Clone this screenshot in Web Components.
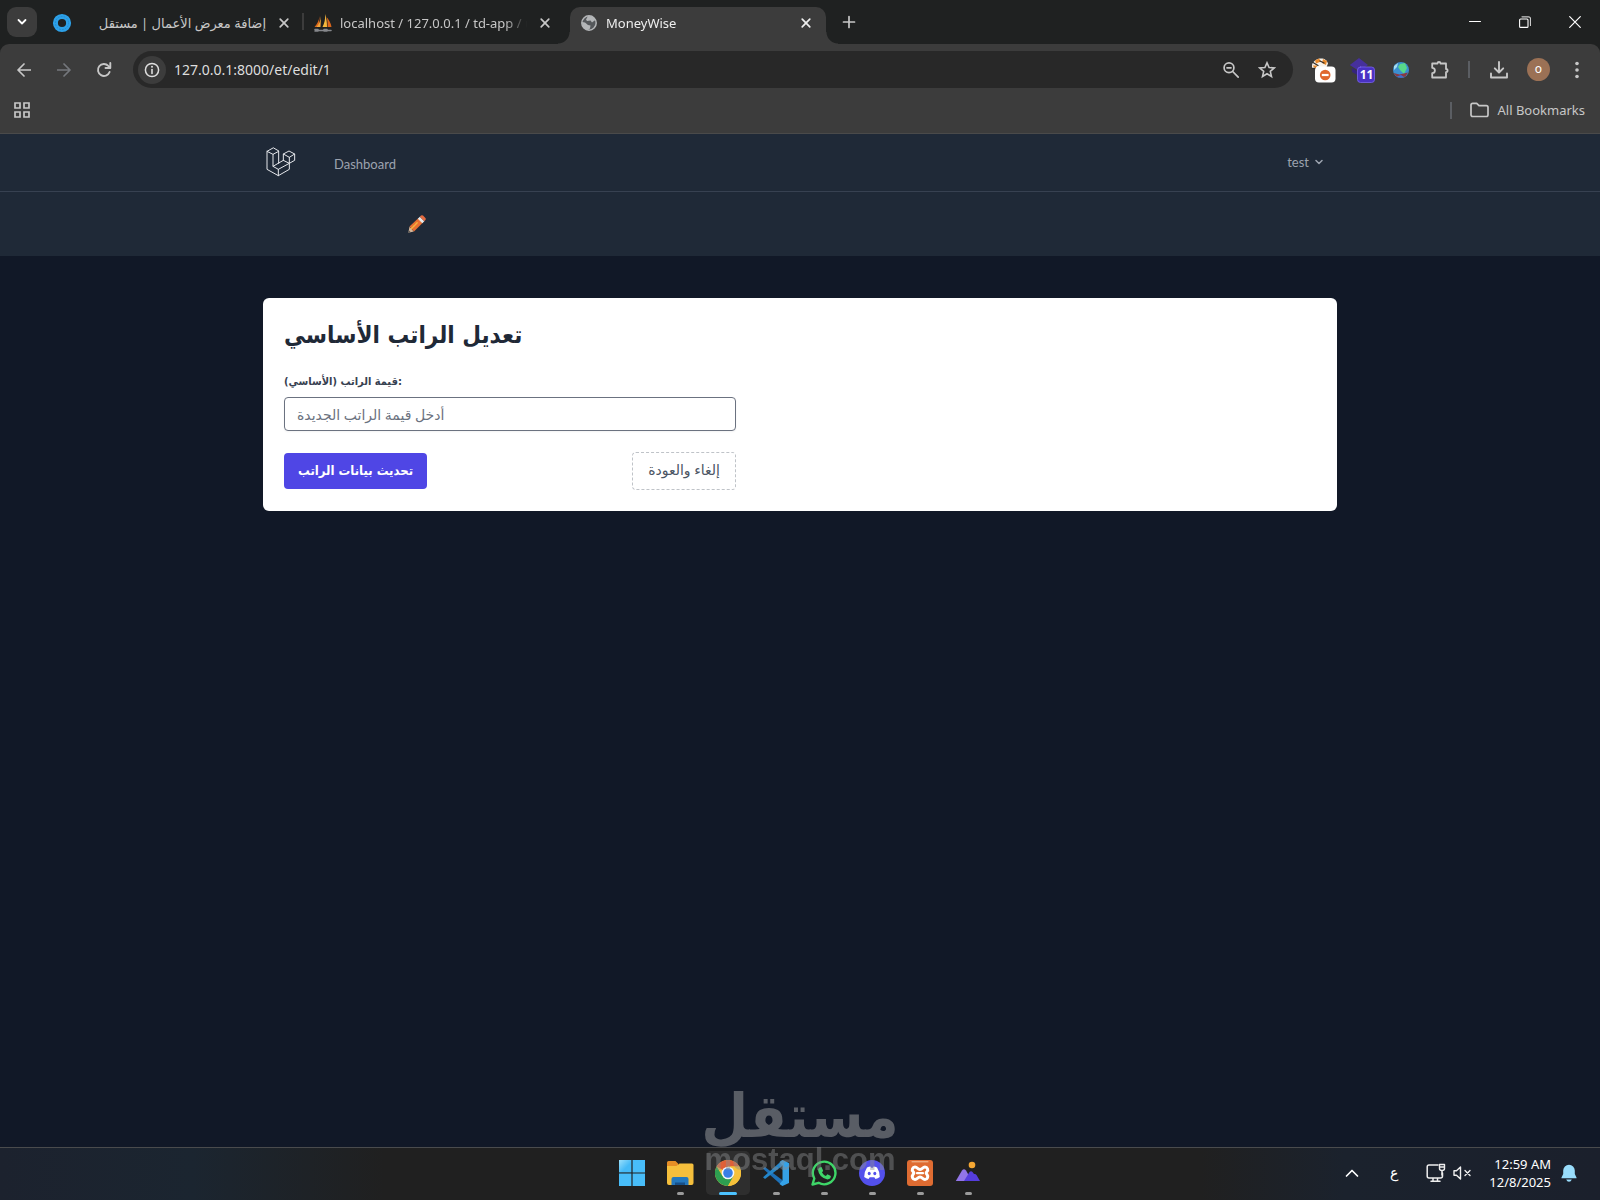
<!DOCTYPE html>
<html lang="en">
<head>
<meta charset="utf-8">
<title>MoneyWise</title>
<style>
  html, body { margin: 0; }
  body {
    min-height: 100vh;
    display: flex;
    flex-direction: column;
    background: #111827;
    color: #c7c7c7;
    font: 13px/20px "Noto Sans", "Open Sans", "DejaVu Sans", sans-serif;
  }
  main { flex: 1; }
</style>
</head>
<body>
  <browser-window>
    <browser-tab slot="tabs" icon="mostaql" dir="rtl">إضافة معرض الأعمال | مستقل</browser-tab>
    <browser-tab slot="tabs" icon="sails">localhost / 127.0.0.1 / td-app / users</browser-tab>
    <browser-tab slot="tabs" icon="globe" active>MoneyWise</browser-tab>
  </browser-window>
  <site-nav user="test"><a-link slot="links" href="#dashboard">Dashboard</a-link></site-nav>
  <main>
    <salary-card><span slot="title">تعديل الراتب الأساسي</span></salary-card>
  </main>
  <task-bar></task-bar>
  <water-mark></water-mark>

<script>
const svg = (w, h, box, body) =>
  `<svg width="${w}" height="${h}" viewBox="${box}" fill="none" stroke-linecap="round" stroke-linejoin="round" aria-hidden="true">${body}</svg>`;

const ICONS = {
  down: svg(12, 12, '0 0 12 12', '<path d="M2.500 4l3.500 3.500L9.500 4" stroke="#fff" stroke-width="1.800"/>'),
  close: svg(12, 12, '0 0 12 12', '<path d="M2.200 2.200l7.600 7.600M9.800 2.200l-7.600 7.600" stroke="currentColor" stroke-width="1.700"/>'),
  plus: svg(14, 14, '0 0 14 14', '<path d="M7 1.500v11M1.500 7h11" stroke="#c7c7c7" stroke-width="1.700"/>'),
  mostaql: svg(20, 20, '0 0 20 20', '<circle cx="10" cy="10" r="6.600" stroke="#2da1e8" stroke-width="5"/><circle cx="10" cy="10" r="6.600" stroke="#2389d0" stroke-dasharray="1 2"/>'),
  sails: svg(18, 18, '0 0 18 18', '<path d="M5.500 2C5 7 3 10 .5 13H5z" fill="#d9651b"/><path d="M7 2l-.5 11H2.500C5 10 6.500 7 7 2z" fill="#f2a63b"/><path d="M11 0c.5 5-.5 9-2.500 13H13C13 8 12.500 4 11 0z" fill="#f5b83d"/><path d="M12.500 3c2.500 3 4.500 6 5 10h-4c.3-4 0-7-1-10z" fill="#d9651b"/><path d="M1 15.500h3m1 1h4m1-1h3m1 1h3M1 17h3m6 0h3" stroke="#85878b" stroke-width="1.600"/>'),
  globe: svg(16, 16, '0 0 16 16', '<circle cx="8" cy="8" r="7.200" fill="#55585b" stroke="#b4b6b8" stroke-width="1.500"/><path d="M7 1c3-.5 6 1 7.300 4L11 7.500 9.500 5.500 6 6 5 4.500zM1 7l3 .5 3 2.500 2.500.5-.5 3-2 1.500C3.500 14.500 1 11.500 1 7z" fill="#b4b6b8"/>'),
  minimise: svg(12, 12, '0 0 12 12', '<path d="M.5 5.500h11" stroke="#fff"/>'),
  restore: svg(12, 12, '0 0 12 12', '<rect x=".6" y="3" width="8.400" height="8.400" rx="1" stroke="#fff" stroke-width="1.100"/><path d="M3 .8h6.500a2 2 0 0 1 2 2V9.500" stroke="#ccc" stroke-width="1.200"/>'),
  exit: svg(12, 12, '0 0 12 12', '<path d="M.7.7l10.600 10.600M11.300.7L.7 11.300" stroke="#fff" stroke-width="1.200"/>'),
  back: svg(14, 14, '0 0 14 14', '<path d="M13.500 7H1.200M7 1L1 7l6 6" stroke="#c7c7c7" stroke-width="1.700"/>'),
  forward: svg(14, 14, '0 0 14 14', '<path d="M.5 7h12.300M7 1l6 6-6 6" stroke="#74777c" stroke-width="1.700"/>'),
  reload: svg(16, 16, '0 0 16 16', '<path d="M13.600 10A6 6 0 1 1 12.300 3.800L14 5.500" stroke="#c7c7c7" stroke-width="1.900"/><path d="M14.300 1v5H9.500" stroke="#c7c7c7" stroke-width="1.900"/>'),
  info: svg(16, 16, '0 0 16 16', '<circle cx="8" cy="8" r="6.600" stroke="#dedede" stroke-width="1.500"/><path d="M8 7.500v4" stroke="#dedede" stroke-width="1.600"/><circle cx="8" cy="4.800" r="1" fill="#dedede"/>'),
  zoom: svg(18, 18, '0 0 18 18', '<circle cx="7" cy="6.800" r="4.900" stroke="#c7c7c7" stroke-width="1.700"/><path d="M10.700 10.500l5.500 5.700M5 6.800h4" stroke="#c7c7c7" stroke-width="1.700"/>'),
  star: svg(18, 18, '0 0 18 18', '<path d="M9 1.800l2.100 4.700 5.100.5-3.900 3.400 1.200 5.100L9 12.800l-4.500 2.700 1.200-5.100L1.800 7l5.100-.5z" stroke="#c7c7c7" stroke-width="1.600" stroke-linejoin="miter"/>'),
  fox: svg(26, 26, '0 0 26 26', '<path d="M2 8c1-4 5-6.500 9-6.500 4 0 6 2 7 5l-2 5H4.500L2 11z" fill="#f7f2ea"/><path d="M5 3.500l4-2 2 3-5 2zM13 2l4 2-1 4-4-2zM2.500 8.500h5l-2 3z" fill="#e98a2c"/><path d="M3 5.500l5 3M10 4l4 2M2 11.500h4" stroke="#332d29" stroke-width="1.300"/><rect x="5" y="9.500" width="20.500" height="16" rx="4" fill="#fff"/><circle cx="15.200" cy="18" r="5.300" fill="#e0682f"/><path d="M11.800 18h6.800" stroke="#fff" stroke-width="2.200" stroke-linecap="butt"/>'),
  hat: svg(26, 26, '0 0 26 26', '<path d="M.8 8L10 1l9 7-9 6z" fill="#46309c"/><path d="M3 11l6 3.500v4L3 15z" fill="#35247c"/><rect x="8.500" y="10" width="17" height="15.500" rx="3" fill="#4a32c4" stroke="#7a65ec" stroke-width=".8"/>'),
  earth: svg(16, 16, '0 0 16 16', '<circle cx="8" cy="8" r="8" fill="#3b8fd0"/><path d="M7 2l5-1 2 5-3 6-4-4-2-3z" fill="#58d88a"/><path d="M1 4l4-3-1 4-3 3z" fill="#a5dcef"/><path d="M.5 11l6 1.500 8.500-2-2.500 4-5 1.500L3 14z" fill="#893943"/><path d="M4 14.500l4-1.500 3 2-3 1z" fill="#3d6fd0"/>'),
  puzzle: svg(20, 20, '0 0 20 20', '<path d="M2.200 3.500h5.300a1.500 1.500 0 0 1 3 0h5.500v5.500a1.600 1.600 0 0 1 0 3.200v5.300H2.200v-4.300a2.700 2.700 0 0 0 0-5.400z" stroke="#c7c7c7" stroke-width="1.800"/>'),
  download: svg(18, 18, '0 0 18 18', '<path d="M9 1v10M4.800 7.300L9 11.500l4.200-4.200M1 12.500v4h16v-4" stroke="#c7c7c7" stroke-width="1.900"/>'),
  kebab: svg(6, 18, '0 0 6 18', '<circle cx="3" cy="2.500" r="1.800" fill="#c7c7c7"/><circle cx="3" cy="9" r="1.800" fill="#c7c7c7"/><circle cx="3" cy="15.500" r="1.800" fill="#c7c7c7"/>'),
  apps: svg(16, 16, '0 0 16 16', '<path d="M1 1h5v5H1zM10 1h5v5h-5zM1 10h5v5H1zM10 10h5v5h-5z" stroke="#c7c7c7" stroke-width="1.700" stroke-linejoin="miter"/>'),
  folder: svg(19, 16, '0 0 19 16', '<path d="M1 12.500V3a1.700 1.700 0 0 1 1.700-1.700h4L9 3.600h7.300A1.700 1.700 0 0 1 18 5.300v7.500a1.700 1.700 0 0 1-1.700 1.700H2.700A1.700 1.700 0 0 1 1 12.500z" stroke="#c7c7c7" stroke-width="1.700"/>'),
  laravel: svg(30, 30, '79 51 90 90', '<path d="M100 54L82 64v54l34 19 33-19v-18l16-9V72l-17-9-17 9v19l-31 18V73l17-9zM82 64l18 9M117 64v36M100 109l16 9 33-18-18-9M116 118v19M131 72l18 10 16-10M149 82v18" stroke="#e5e7eb" stroke-width="3"/>'),
  caret: svg(8, 8, '0 0 8 8', '<path d="M1 2.500l3 3 3-3" stroke="#9ca3af" stroke-width="1.500"/>'),
  pencil: svg(18, 18, '0 0 18 18', '<path d="M.3 17.700l1.200-6L5.800 16.500z" fill="#d8b79a"/><path d="M.3 17.700l.5-2.500 2 2z" fill="#555"/><path d="M1.500 11.500L10.500 3l4.500 4.500-9 9z" fill="#e66f33"/><path d="M3.500 13.500l6-6" stroke="#f5b13d" stroke-width="1.500" stroke-dasharray="2 1"/><path d="M9.800 3.700l2-2 4.500 4.500-2 2z" fill="#e6e9ea"/><path d="M11.800 1.700L13 .6q1-.8 2 0l2.400 2.400q.8 1 0 2l-1.100 1.200z" fill="#e46b41"/>'),
  windows: svg(26, 26, '0 0 26 26', '<defs><linearGradient id="g" x2="1" y2="1"><stop stop-color="#9be0fb"/><stop offset=".6" stop-color="#45baf7"/></linearGradient></defs><path d="M0 0h12.400v12.400H0z" fill="url(#g)"/><path d="M13.600 0H26v12.400H13.600zM0 13.600h12.400V26H0zM13.600 13.600H26V26H13.600z" fill="#48bdf9"/>'),
  explorer: svg(28, 26, '0 0 28 26', '<path d="M1 8V2.500Q1 1 2.500 1h7l3 3H12v5z" fill="#e58e26"/><path d="M1 6h9.500l3-2.500H26q1.500 0 1.500 1.500v18q0 2-2 2H3q-2 0-2-2z" fill="#f5bf3c"/><path d="M5.500 25v-6q0-2 2-2h13q2 0 2 2v6z" fill="#2478bd"/><path d="M9 25v-2.500h10V25" fill="#174f87"/>'),
  chrome: svg(26, 26, '0 0 26 26', '<circle cx="13" cy="13" r="13" fill="#f6c13a"/><path d="M13 13L1.740 6.500A13 13 0 0 1 24.260 6.500H13z" fill="#df6038"/><path d="M1.740 6.500A13 13 0 0 0 13 26l5.500-9.500L7.500 16.200z" fill="#2d9e50"/><path d="M13 6.500h11.260A13 13 0 0 1 13 26l5.600-9.700z" fill="#f6c13a"/><circle cx="13" cy="13" r="6.300" fill="#f4f6fa"/><circle cx="13" cy="13" r="4.800" fill="#397fe6"/>'),
  vscode: svg(26, 26, '0 0 26 26', '<path d="M0 8.800l2-1.800L19.500 20.300V26z" fill="#1d71b8"/><path d="M0 17.200L2 19 19.500 5.700V0z" fill="#2486ca"/><path d="M19.500 0L26 3v20l-6.500 3-3-2 3-3.500v-15l-3-3.500z" fill="#35a2e8"/>'),
  whatsapp: svg(26, 26, '0 0 26 26', '<path d="M1.500 24.500l1.800-6A11.300 11.300 0 1 1 7.600 22.800z" stroke="#3ed668" stroke-width="2.400"/><path d="M8.500 7.500l2-.5 1.700 3.700-1.200 1.700q1.500 2.600 3.900 3.500l1.500-1.600 3.500 1.700q0 3-3.400 3.500Q8 17.500 7 10q.3-1.800 1.500-2.500z" fill="#3ed668"/>'),
  discord: svg(26, 26, '0 0 26 26', '<circle cx="13" cy="13" r="13" fill="#5350ec"/><path d="M8 7.500q2-1 3.500-1l.7 1.200h1.600l.7-1.200q1.500 0 3.500 1 3 4.500 2.800 9.500-2 1.700-4.300 2l-1.200-1.800h-4.600L9.500 19q-2.300-.3-4.300-2Q5 12 8 7.500z" fill="#fff"/><ellipse cx="10.200" cy="13.500" rx="1.500" ry="1.700" fill="#5350ec"/><ellipse cx="15.800" cy="13.500" rx="1.500" ry="1.700" fill="#5350ec"/>'),
  xampp: svg(26, 26, '0 0 26 26', '<rect width="26" height="26" rx="3" fill="#df6c32"/><path d="M5 1.800h16" stroke="#f3c49c"/><path d="M8 7c2.500 0 2.500 2.500 5 2.500S15.500 7 18 7s3.500 3 2 4.500c-1 1-1 2 0 3 1.500 2 .5 5-2 5s-2.500-2.500-5-2.500-2.500 2.500-5 2.500-3.500-3-2-5c1-1 1-2 0-3C4.500 10 5.500 7 8 7z" stroke="#fff" stroke-width="3"/><path d="M10 13.200h6" stroke="#fff" stroke-width="2.200"/>'),
  peaks: svg(26, 26, '0 0 26 26', '<path d="M.8 21L7 10.500q2-2.500 4 0l4 7L13 21z" fill="#9275e8"/><path d="M9 21l5.500-9q1.500-1.500 3 0L19 14q1.500-.5 2.500 1l3.500 6z" fill="#553ddd"/><circle cx="17" cy="5" r="3.300" fill="#f5a733"/>'),
  up: svg(14, 14, '0 0 14 14', '<path d="M1.500 10L7 4.500l5.500 5.500" stroke="#fff" stroke-width="1.700"/>'),
  monitor: svg(20, 20, '0 0 20 20', '<path d="M12 2H3Q1.200 2 1.200 4v9q0 2 1.800 2h11.500q2 0 2-2v-3M7 15v3M11.500 15v3M5 18.300h9" stroke="#eee" stroke-width="1.500"/><path d="M13.500 1.500h5v4q0 2-2.500 2t-2.500-2zM13.500 4h5" stroke="#eee" stroke-width="1.400"/><path d="M16 8v4" stroke="#eee" stroke-width="1.500"/>'),
  mute: svg(18, 14, '0 0 18 14', '<path d="M1 4.800v4.400h2.500L7.500 13V1L3.500 4.800zM12 4.500l5 5M17 4.500l-5 5" stroke="#eee" stroke-width="1.400"/>'),
  bell: svg(16, 18, '0 0 16 18', '<path d="M.5 13.500L2.200 10V6.500a5.800 5.800 0 0 1 11.600 0V10l1.700 3.500v.7H.5zM5.200 15.500h5.600Q10 17.700 8 17.700t-2.800-2.200z" fill="#98dcfb"/>')
};

class BaseElement extends HTMLElement {
  constructor() {
    super();
    this.attachShadow({ mode: 'open' });
  }
  connectedCallback() {
    this.shadowRoot.innerHTML = `
      <style>
        * { box-sizing: border-box; }
        svg { display: block; flex: none; }
        button { margin: 0; padding: 0; border: 0; background: none; color: inherit; font: inherit; display: flex; align-items: center; justify-content: center; }
        a { color: inherit; text-decoration: none; }
      </style>${this.render()}`;
  }
}

customElements.define('a-link', class extends BaseElement {
  render() {
    return `<style>:host { display: block; }</style><a href="${this.getAttribute('href')}"><slot></slot></a>`;
  }
});

customElements.define('browser-tab', class extends BaseElement {
  render() {
    return `
      <style>
        :host { display: block; flex: 0 1 261px; min-width: 0; height: 37px; direction: ltr; position: relative; color: #c7c7c7; }
        .tab { display: flex; align-items: center; height: 32px; padding: 0 10px; gap: 8px; }
        .icon { width: 18px; display: flex; justify-content: center; }
        .title { flex: 1; overflow: hidden; white-space: nowrap; }
        :host([dir=rtl]) .title { direction: rtl; }
        :host([dir=rtl])::after { content: ""; position: absolute; right: 0; top: 6px; width: 2px; height: 17px; background: #3c3c3c; }
        :host(:not([dir=rtl])) .title { -webkit-mask-image: linear-gradient(90deg, #000 88%, transparent); mask-image: linear-gradient(90deg, #000 88%, transparent); }
        button { width: 20px; height: 20px; }
        :host([active]) { background: #3c3c3c; border-radius: 10px 10px 0 0; color: #eee; flex-basis: 256px; margin-left: 5px; }
        :host([active])::before, :host([active])::after { content: ""; position: absolute; bottom: 0; width: 12px; height: 12px; }
        :host([active])::before { right: 100%; background: radial-gradient(circle at 0 0, #1f2121 11px, #3c3c3c 12px); }
        :host([active])::after { left: 100%; background: radial-gradient(circle at 100% 0, #1f2121 11px, #3c3c3c 12px); }
      </style>
      <div class="tab">
        <span class="icon">${ICONS[this.getAttribute('icon')]}</span>
        <span class="title"><slot></slot></span>
        <button aria-label="Close tab">${ICONS.close}</button>
      </div>`;
  }
});

customElements.define('browser-window', class extends BaseElement {
  render() {
    return `
      <style>
        :host { display: block; background: #1f2121; border-bottom: 1px solid #4a4a4a; }
        .strip { display: flex; padding-top: 7px; height: 44px; }
        .menu { width: 30px; height: 30px; margin: 0 6px 0 7px; border-radius: 9px; background: #3c3c3c; }
        .plus { width: 20px; height: 30px; margin-left: 13px; }
        .system { display: flex; margin-left: auto; }
        .system button { width: 50px; height: 30px; }
        .panel { background: #3c3c3c; border-radius: 9px 9px 0 0; }
        .toolbar { display: flex; align-items: center; height: 51px; padding: 0 5px 0 4px; }
        .tool { width: 39px; height: 36px; }
        .nav { width: 40px; }
        .address { flex: 1; display: flex; align-items: center; height: 37px; margin: 0 10px 0 9px; padding: 0 8px 0 5px; border-radius: 19px; background: #282828; }
        .info { width: 28px; height: 28px; border-radius: 14px; background: #3c3c3c; }
        .address input { flex: 1; min-width: 0; padding: 0; margin: 0 0 0 8px; border: 0; outline: 0; background: none; color: #dedede; font: 14px/20px "Noto Sans", sans-serif; }
        .address .tool { width: 36px; }
        .ext { position: relative; }
        .ext b { position: absolute; left: 16px; top: 16px; width: 17px; text-align: center; font-size: 12px; line-height: 14px; color: #fff; }
        .rule { width: 2px; height: 17px; background: #5b5e63; }
        .rule.mid { margin: 0 9px; }
        .avatar { width: 23px; height: 23px; border-radius: 12px; background: #9b7155; color: #fff; font-size: 12px; line-height: 12px; margin: 0 9px 0 9px; padding-bottom: 2px; }
        .marks { display: flex; align-items: center; justify-content: flex-end; height: 38px; padding: 0 15px 8px 14px; }
        .apps { margin-right: auto; }
        .marks .rule { margin-right: 18px; }
        .marks a { display: flex; align-items: center; gap: 8px; }
        .end { width: 36px; }
      </style>
      <div class="strip">
        <button class="menu" aria-label="Search tabs">${ICONS.down}</button>
        <slot name="tabs"></slot>
        <button class="plus" aria-label="New tab">${ICONS.plus}</button>
        <div class="system">
          <button aria-label="Minimise">${ICONS.minimise}</button>
          <button aria-label="Restore">${ICONS.restore}</button>
          <button aria-label="Close">${ICONS.exit}</button>
        </div>
      </div>
      <div class="panel">
        <div class="toolbar">
          <button class="tool nav" aria-label="Back">${ICONS.back}</button>
          <button class="tool nav" aria-label="Forward">${ICONS.forward}</button>
          <button class="tool nav" aria-label="Reload">${ICONS.reload}</button>
          <div class="address">
            <button class="info" aria-label="Site information">${ICONS.info}</button>
            <input type="text" aria-label="Address" value="127.0.0.1:8000/et/edit/1">
            <button class="tool" aria-label="Zoom">${ICONS.zoom}</button>
            <button class="tool" aria-label="Bookmark">${ICONS.star}</button>
          </div>
          <button class="tool ext" aria-label="Blocker">${ICONS.fox}</button>
          <button class="tool ext" aria-label="Counter">${ICONS.hat}<b>11</b></button>
          <button class="tool ext" aria-label="Globe">${ICONS.earth}</button>
          <button class="tool" aria-label="Extensions">${ICONS.puzzle}</button>
          <span class="rule mid"></span>
          <button class="tool" aria-label="Downloads">${ICONS.download}</button>
          <button class="avatar" aria-label="Profile">o</button>
          <button class="tool end" aria-label="Menu">${ICONS.kebab}</button>
        </div>
        <div class="marks">
          <button class="apps" aria-label="Apps">${ICONS.apps}</button>
          <span class="rule"></span>
          <a href="#bookmarks">${ICONS.folder}<span>All Bookmarks</span></a>
        </div>
      </div>`;
  }
});

customElements.define('site-nav', class extends BaseElement {
  render() {
    return `
      <style>
        :host { display: block; background: #1f2937; color: #9ca3af; font: 13px/18px Lato, sans-serif; }
        .row { max-width: 1074px; margin: 0 auto; display: flex; align-items: center; }
        .bar { border-bottom: 1px solid #374151; }
        .bar .row { height: 57px; padding: 0 14px 2px 3px; }
        nav { margin: 4px auto 0 38px; }
        .user { gap: 6px; }
        .head .row { height: 64px; padding-left: 145px; }
      </style>
      <div class="bar"><div class="row">
        <a href="#home" aria-label="Home">${ICONS.laravel}</a>
        <nav><slot name="links"></slot></nav>
        <button class="user">${this.getAttribute('user')}${ICONS.caret}</button>
      </div></div>
      <div class="head"><div class="row">${ICONS.pencil}</div></div>`;
  }
});

customElements.define('salary-card', class extends BaseElement {
  render() {
    return `
      <style>
        :host { display: block; max-width: 1074px; margin: 42px auto; background: #fff; color: #1f2937; border-radius: 6px; padding: 21px; box-sizing: border-box; font-family: "DejaVu Sans Condensed", "DejaVu Sans", sans-serif; }
        h1 { margin: 0 0 22px; font-size: 24px; line-height: 32px; font-weight: 700; }
        form { max-width: 452px; }
        label { display: block; font-size: 11px; line-height: 18px; font-weight: 700; margin-bottom: 6px; color: #374151; }
        input { display: block; width: 100%; height: 34px; padding: 0 12px; border: 1px solid #6b7280; border-radius: 4px; background: #fff; font: 14px/20px "Open Sans", "DejaVu Sans", sans-serif; box-shadow: 0 1px 2px #0000000d; }
        input::placeholder { color: #6b7280; }
        .actions { display: flex; justify-content: space-between; align-items: center; margin-top: 21px; }
        button { height: 36px; padding: 0 14px; border-radius: 4px; background: #4f46e5; color: #fff; font-size: 13px; font-weight: 700; }
        .actions a { height: 38px; padding: 0 15px; border: 1px dashed #bfc3c8; border-radius: 4px; color: #4b5563; font: 14px/34px "Open Sans", "DejaVu Sans", sans-serif; }
      </style>
      <h1><slot name="title"></slot></h1>
      <form>
        <label for="amount">قيمة الراتب (الأساسي):</label>
        <input id="amount" type="text" placeholder="أدخل قيمة الراتب الجديدة">
        <div class="actions">
          <button type="button">تحديث بيانات الراتب</button>
          <a href="#back">إلغاء والعودة</a>
        </div>
      </form>`;
  }
});

customElements.define('task-bar', class extends BaseElement {
  render() {
    const apps = ['windows', 'explorer', 'chrome', 'vscode', 'whatsapp', 'discord', 'xampp', 'peaks'];
    return `
      <style>
        :host { display: grid; grid-template-columns: 1fr auto 1fr; height: 53px; box-sizing: border-box; border-top: 1px solid #4a4b4d; color: #fff; font-size: 13px; line-height: 18px;
          background: linear-gradient(90deg, #1c222e 0, #1b2530 12%, #202020 24%, #202020 75%, #1b222d 84%, #1b202c 100%); }
        .apps { grid-column: 2; display: flex; align-items: center; gap: 4px; padding-bottom: 2px; }
        .apps button { position: relative; width: 44px; height: 44px; border-radius: 5px; }
        .apps button::after { content: ""; position: absolute; bottom: 0; width: 7px; height: 3px; border-radius: 2px; background: #9b9b9b; }
        .apps .windows::after { display: none; }
        .apps .chrome { background: #2e2e2e; }
        .apps .chrome::after { width: 18px; background: #4cc2ff; }
        .tray { display: flex; align-items: center; justify-content: flex-end; padding: 0 23px 2px 0; }
        .lang { margin: 0 28px 0 31px; font-size: 14px; }
        .mute { margin: 0 18px 0 7px; }
        time { text-align: right; margin-right: 10px; }
      </style>
      <div class="apps">${apps.map(name => `<button class="${name}" aria-label="${name}">${ICONS[name]}</button>`).join('')}</div>
      <div class="tray">
        <button aria-label="Hidden icons">${ICONS.up}</button>
        <span class="lang">ع</span>
        ${ICONS.monitor}
        <span class="mute">${ICONS.mute}</span>
        <time>12:59 AM<br>12/8/2025</time>
        ${ICONS.bell}
      </div>`;
  }
});

customElements.define('water-mark', class extends BaseElement {
  render() {
    return `
      <style>
        :host { position: fixed; left: 0; right: 0; bottom: 22px; display: flex; flex-direction: column; align-items: center; pointer-events: none; color: #8b8c8f; opacity: .6; white-space: nowrap; }
        .ar { font: 700 60px/52px "DejaVu Sans Condensed", "DejaVu Sans", sans-serif; }
        .en { font: 700 31px/36px "Liberation Sans", sans-serif; opacity: .75; }
      </style>
      <span class="ar">مستقل</span>
      <span class="en">mostaql.com</span>`;
  }
});
</script>
</body>
</html>
